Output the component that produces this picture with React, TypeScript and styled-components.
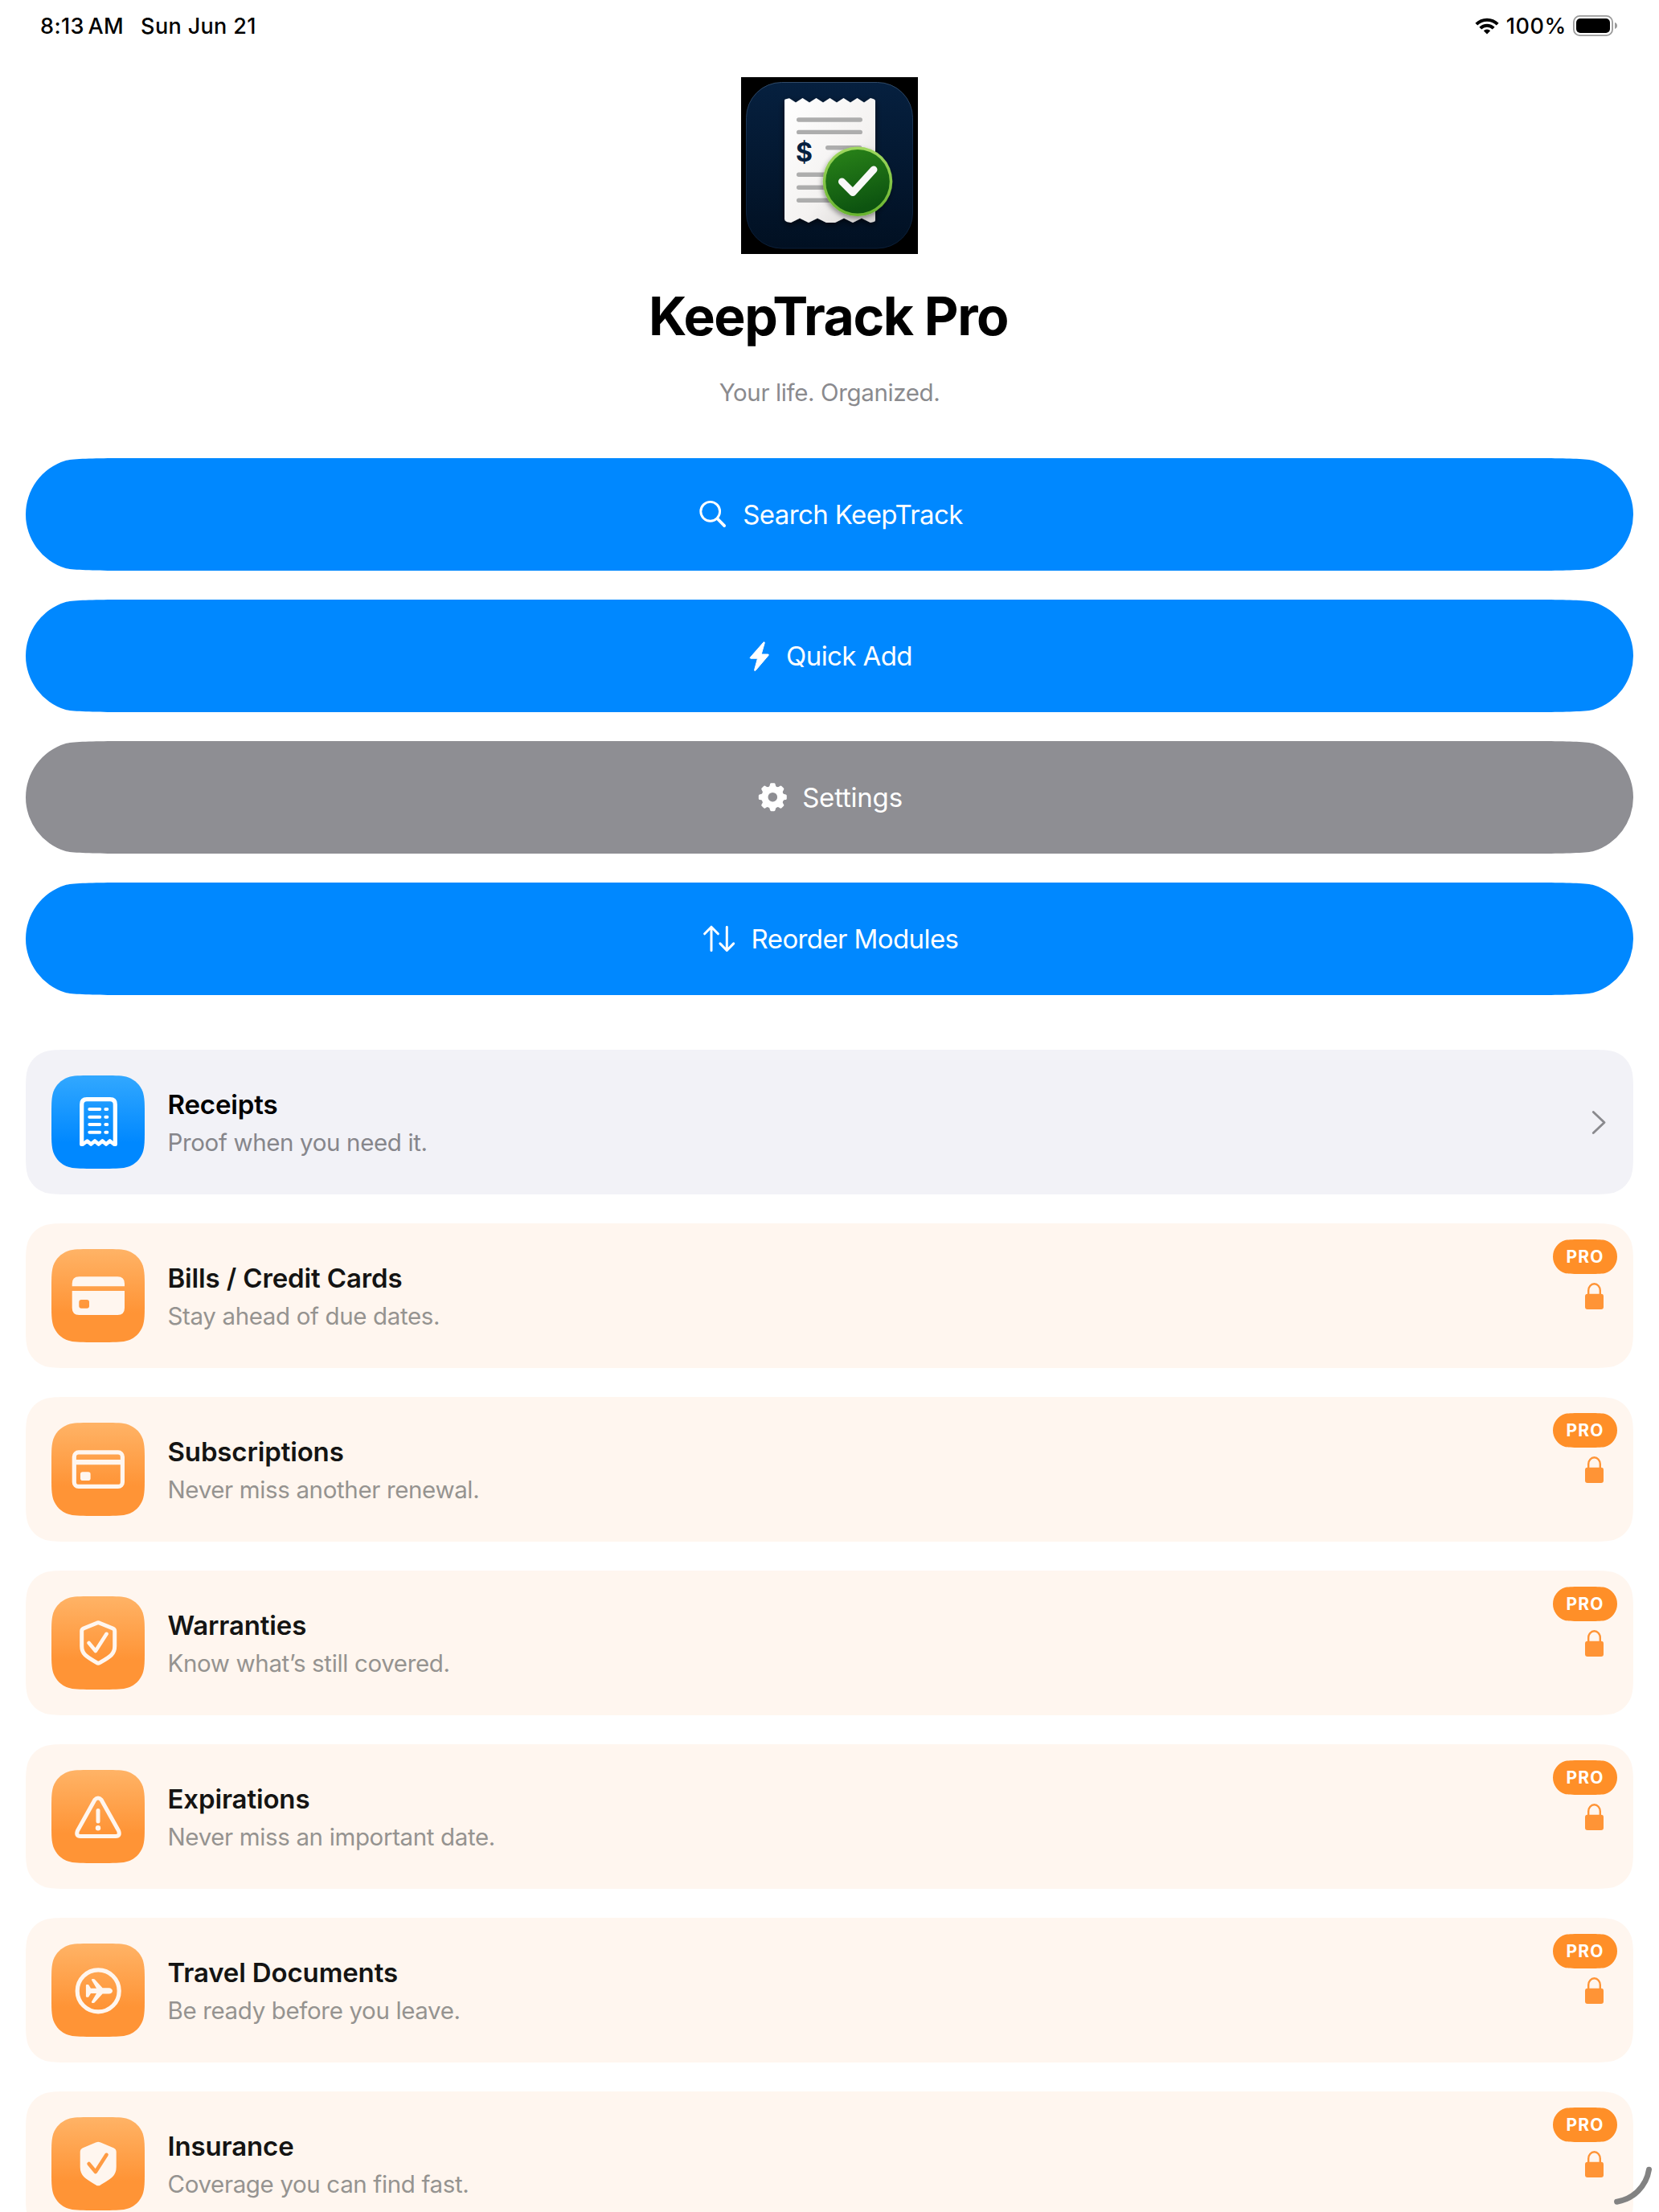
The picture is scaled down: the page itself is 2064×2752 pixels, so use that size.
import type { ReactNode } from 'react';
import styled, { createGlobalStyle } from 'styled-components';

// Capsule: circular end caps that ease slowly into the straight edges
const capsule = (w: number, h: number) => {
  const r = h / 2;
  const a = 1.53 * r;
  const b = 0.7 * r;
  const c = 0.04586 * r;
  const f = 1.143 * r;
  const p = 0.807 * r;
  const s = 0.0125 * r;
  const t = 0.005 * r;

  return [
    `M${a} 0H${w - a}`,
    `C${w - f} ${t} ${w - p} ${s} ${w - b} ${c}`,
    `A${r} ${r} 0 0 1 ${w} ${r}`,
    `A${r} ${r} 0 0 1 ${w - b} ${h - c}`,
    `C${w - p} ${h - s} ${w - f} ${h - t} ${w - a} ${h}`,
    `H${a}`,
    `C${f} ${h - t} ${p} ${h - s} ${b} ${h - c}`,
    `A${r} ${r} 0 0 1 0 ${r}`,
    `A${r} ${r} 0 0 1 ${b} ${c}`,
    `C${p} ${s} ${f} ${t} ${a} 0Z`,
  ].join('');
};

// Rounded rectangle with continuous (smoothed) corners
const smoothRect = (w: number, h: number, r: number) => {
  const a = 1.528665 * r;
  const b = 0.631494 * r;
  const c = 0.074911 * r;
  const d = 0.372824 * r;
  const e = 0.169059 * r;
  const f = 1.088493 * r;
  const g = 0.868407 * r;

  return [
    `M${a} 0H${w - a}`,
    `C${w - f} 0 ${w - g} 0 ${w - b} ${c}`,
    `C${w - d} ${e} ${w - e} ${d} ${w - c} ${b}`,
    `C${w} ${g} ${w} ${f} ${w} ${a}`,
    `V${h - a}`,
    `C${w} ${h - f} ${w} ${h - g} ${w - c} ${h - b}`,
    `C${w - e} ${h - d} ${w - d} ${h - e} ${w - b} ${h - c}`,
    `C${w - g} ${h} ${w - f} ${h} ${w - a} ${h}`,
    `H${a}`,
    `C${f} ${h} ${g} ${h} ${b} ${h - c}`,
    `C${d} ${h - e} ${e} ${h - d} ${c} ${h - b}`,
    `C0 ${h - g} 0 ${h - f} 0 ${h - a}`,
    `V${a}`,
    `C0 ${f} 0 ${g} ${c} ${b}`,
    `C${e} ${d} ${d} ${e} ${b} ${c}`,
    `C${g} 0 ${f} 0 ${a} 0Z`,
  ].join('');
};

const GlobalStyle = createGlobalStyle`
  * {
    box-sizing: border-box;
  }

  body {
    margin: 0;
    background: #fff;
    color: #000;
    font-family: Inter, "Liberation Sans", sans-serif;
  }
`;

const Screen = styled.div`
  position: relative;
  width: 2064px;
  height: 2752px;
  overflow: hidden;
  background: #fff;
`;

const StatusBar = styled.header`
  display: flex;
  align-items: center;
  height: 64px;
  padding: 0 52px 0 50px;
  font-size: 27px;
  font-weight: 450;
  line-height: 36px;

  span {
    padding-top: 1px;
  }
`;

const Time = styled.span`
  letter-spacing: 0.4px;
  word-spacing: -3px;
`;

const DateText = styled.span`
  margin-left: 21px;
  letter-spacing: 0.35px;
`;

const StatusRight = styled.div`
  display: flex;
  align-items: center;
  margin-left: auto;
`;

const Percent = styled.span`
  margin: 0 8px 0 9px;
  letter-spacing: 0.6px;
`;

const Content = styled.main`
  display: flex;
  flex-direction: column;
  align-items: center;
  padding: 32px 32px 0;
`;

const Title = styled.h1`
  margin: 37px 0 0;
  padding-right: 3px;
  font-size: 66px;
  font-weight: 700;
  line-height: 80px;
  letter-spacing: -1.45px;
`;

const Tagline = styled.p`
  margin: 37px 0 0;
  color: #8a8a8e;
  font-size: 29.5px;
  line-height: 36px;
  letter-spacing: -0.38px;
`;

const Actions = styled.div`
  display: flex;
  flex-direction: column;
  gap: 36px;
  margin-top: 64px;
`;

const ActionButton = styled.button<{ $muted?: boolean }>`
  display: flex;
  align-items: center;
  justify-content: center;
  gap: 16px;
  width: 2000px;
  height: 140px;
  padding: 0 1px 0 0;
  border: 0;
  background: ${({ $muted }) => ($muted ? '#8e8e93' : '#0088ff')};
  clip-path: path('${capsule(2000, 140)}');
  color: #fff;
  font: inherit;
  font-size: 33px;
  letter-spacing: ${({ $muted }) => ($muted ? '-0.2px' : '-0.6px')};
`;

const Modules = styled.div`
  display: flex;
  flex-direction: column;
  gap: 36px;
  margin-top: 68px;
`;

const ModuleCard = styled.article<{ $locked?: boolean }>`
  display: flex;
  align-items: center;
  width: 2000px;
  height: 180px;
  padding: 0 32px;
  background: ${({ $locked }) => ($locked ? '#fff6ef' : '#f2f2f7')};
  clip-path: path('${smoothRect(2000, 180, 36)}');
  color: ${({ $locked }) => ($locked ? '#141413' : '#000')};
`;

const Tile = styled.div<{ $locked?: boolean }>`
  width: 116px;
  height: 116px;
  background: ${({ $locked }) =>
    $locked
      ? 'linear-gradient(#ffb366, #ff9436 68%, #ff9436)'
      : 'linear-gradient(#32a8ff, #0088ff 72%, #0088ff)'};
  clip-path: path('${smoothRect(116, 116, 32)}');
  color: ${({ $locked }) => ($locked ? '#fff6ef' : '#fff')};

  > svg {
    display: block;
  }
`;

const CardText = styled.div`
  display: flex;
  flex-direction: column;
  gap: 8px;
  margin-left: 28.5px;
`;

const CardTitle = styled.h2`
  margin: 0;
  font-size: 33px;
  font-weight: 600;
  line-height: 42px;
  letter-spacing: -0.14px;
`;

const CardSubtitle = styled.p<{ $locked?: boolean }>`
  margin: 0;
  color: ${({ $locked }) => ($locked ? '#959390' : '#86868b')};
  font-size: 29.5px;
  line-height: 36px;
  letter-spacing: -0.36px;
`;

const Chevron = styled.svg`
  margin-left: auto;
`;

const LockInfo = styled.div`
  display: flex;
  flex-direction: column;
  align-items: flex-end;
  align-self: flex-start;
  gap: 11px;
  margin: 20px -12px 0 auto;
`;

const ProBadge = styled.span`
  display: flex;
  align-items: center;
  justify-content: center;
  width: 80px;
  height: 43px;
  background: #ff8f28;
  clip-path: path('${capsule(80, 43)}');
  color: #fff;
  font-size: 21px;
  font-weight: 700;
  letter-spacing: 1.1px;
`;

const Lock = styled.svg`
  margin-right: 17px;
`;

// Window resize handle, floats over the corner of the screen
const ResizeHandle = styled.svg`
  position: absolute;
  right: 0;
  bottom: 0;
`;

function WifiIcon() {
  return (
    <svg width="30" height="21" viewBox="0 0 30 21" fill="none" stroke="#000" strokeWidth="4">
      <path d="M1.8 8.2a18.6 18.6 0 0 1 26.4 0" />
      <path d="M6.8 13.2a11.5 11.5 0 0 1 16.4 0" />
      <path d="M15 20.6l-4.2-4.3a6 6 0 0 1 8.4 0z" fill="#000" stroke="none" />
    </svg>
  );
}

function BatteryIcon() {
  return (
    <svg width="55" height="26" viewBox="0 0 55 26">
      <rect x="0.9" y="0.9" width="48.2" height="24.2" rx="7.6" fill="none" stroke="#9b9b9b" strokeWidth="1.8" />
      <rect x="4" y="4" width="42" height="18" rx="5" fill="#000" />
      <path d="M52 9c2 .6 3 2.2 3 4s-1 3.4-3 4z" fill="#9b9b9b" />
    </svg>
  );
}

function AppLogo() {
  return (
    <svg width="220" height="220" viewBox="0 0 220 220">
      <defs>
        <linearGradient id="navy" x1="0" y1="0" x2="0" y2="1">
          <stop offset="0" stopColor="#06203f" />
          <stop offset="1" stopColor="#011022" />
        </linearGradient>
        <linearGradient id="rim" x1="0" y1="0" x2="0" y2="1">
          <stop offset="0" stopColor="#304a68" />
          <stop offset="0.4" stopColor="#0d2848" />
          <stop offset="1" stopColor="#0a1e38" />
        </linearGradient>
        <linearGradient id="paper" x1="0" y1="0" x2="1" y2="1">
          <stop offset="0" stopColor="#ffffff" />
          <stop offset="0.6" stopColor="#f4f2f1" />
          <stop offset="1" stopColor="#d5d2d0" />
        </linearGradient>
        <linearGradient id="green" x1="0" y1="0" x2="0.3" y2="1">
          <stop offset="0" stopColor="#2a8519" />
          <stop offset="1" stopColor="#0d5410" />
        </linearGradient>
        <linearGradient id="ring" x1="0" y1="0" x2="0" y2="1">
          <stop offset="0" stopColor="#a0d860" />
          <stop offset="1" stopColor="#68b42e" />
        </linearGradient>
        <filter id="shadow" x="-20%" y="-20%" width="140%" height="140%">
          <feDropShadow dx="0" dy="3" stdDeviation="4" floodColor="#000" floodOpacity="0.6" />
        </filter>
        <filter id="badgeShadow" x="-20%" y="-20%" width="140%" height="140%">
          <feDropShadow dx="-1" dy="3" stdDeviation="3" floodColor="#000" floodOpacity="0.4" />
        </filter>
      </defs>
      <rect width="220" height="220" fill="#000" />
      <rect x="6.5" y="6.5" width="207" height="206.5" rx="44" fill="url(#navy)" stroke="url(#rim)" />
      <path
        filter="url(#shadow)"
        fill="url(#paper)"
        d="M54 29Q54 27.500 56 27.200L60 26.300 68 31.500 76.500 26 85 31.500 93.500 26 102 31.500 110.500 26 119 31.500 127.500 26 136 31.500 144.500 26 153 31.500 161 26 165 27.200Q167 28 167 29.500V178Q167 179.500 165 180L161 181 150 175.500 139 181 128 175.500 117 181 106 181 95 175.500 84 181 73 175.500 62 181 57 180Q54 178.500 54 176.500Z"
      />
      <g stroke="#adadad" strokeWidth="5.4" strokeLinecap="round">
        <path d="M71.700 53h76.600M71.700 68.400h76.600M107.700 87.700h40M71.700 121.300h42M71.700 137.300h42M71.700 153.300h46" />
      </g>
      <text x="78.5" y="104.5" textAnchor="middle" fontFamily="Inter, sans-serif" fontSize="32" fontWeight="650" fill="#06203f">
        $
      </text>
      <g filter="url(#badgeShadow)">
        <circle cx="145" cy="129.7" r="43.3" fill="url(#ring)" />
      </g>
      <circle cx="145" cy="129.7" r="39.8" fill="url(#green)" />
      <path d="M125.500 130l13.500 13.500 26-28.500" fill="none" stroke="#f8f8f8" strokeWidth="9" strokeLinecap="round" strokeLinejoin="round" />
    </svg>
  );
}

function SearchIcon() {
  return (
    <svg width="43" height="48" viewBox="0 0 43 48" fill="none" stroke="#fff" strokeLinecap="round">
      <circle cx="18.7" cy="20.3" r="11.9" strokeWidth="2.9" />
      <path d="M27.500 29.200l8.700 8.900" strokeWidth="3.7" />
    </svg>
  );
}

function BoltIcon() {
  return (
    <svg width="34" height="48" viewBox="0 0 34 48" fill="#fff" stroke="#fff" strokeLinejoin="round">
      <path d="M21.800 7.200L5.500 25.800c-.5.800-.2 1.400.6 1.400h8.400L10.600 41.400c-.3 1.200.8 1.600 1.500.7L28 23.400c.5-.8.200-1.400-.6-1.400H19.200l4-14c.3-1.200-.7-1.600-1.400-.8z" />
    </svg>
  );
}

function GearIcon() {
  const teeth = [0, 45, 90, 135, 180, 225, 270, 315];
  return (
    <svg width="42" height="48" viewBox="0 0 42 48">
      <g transform="translate(21.3 23.7)">
        <circle r="9.8" fill="none" stroke="#fff" strokeWidth="8" />
        {teeth.map((angle) => (
          <path
            key={angle}
            transform={`rotate(${angle})`}
            fill="#fff"
            d="M-5.200-12.500Q-3.700-13.200-3.400-15.500L-3.200-16.400Q-2.900-17.500-1.800-17.500H1.800Q2.900-17.500 3.200-16.400L3.400-15.500Q3.700-13.200 5.200-12.500Z"
          />
        ))}
      </g>
    </svg>
  );
}

function ReorderIcon() {
  return (
    <svg width="48" height="48" viewBox="0 0 48 48" fill="none" stroke="#fff" strokeWidth="3" strokeLinecap="round" strokeLinejoin="round">
      <path d="M14 38.500V9.200M5.600 17.800L14 9.200l8.400 8.600" />
      <path d="M33.300 9.200v29.300M24.900 29.900l8.400 8.600 8.400-8.600" />
    </svg>
  );
}

function ChevronIcon() {
  return (
    <Chevron width="24" height="36" viewBox="0 0 24 36" fill="none" stroke="#8a8a8e" strokeWidth="2.9" strokeLinecap="round" strokeLinejoin="round">
      <path d="M6.300 5.500L20 18.500 6.300 31.500" />
    </Chevron>
  );
}

function LockIcon() {
  return (
    <Lock width="23" height="33" viewBox="0 0 23 33">
      <path d="M4.200 16V9.500a7.300 8.200 0 0 1 14.600 0V16" fill="none" stroke="#ff9436" strokeWidth="2.4" />
      <rect y="13.8" width="23" height="19.2" rx="3" fill="#ff9436" />
    </Lock>
  );
}

function TileIcon({ children }: { children: ReactNode }) {
  return (
    <svg width="116" height="116" viewBox="0 0 116 116" fill="none" stroke="currentColor" strokeWidth="5.2" strokeLinecap="round" strokeLinejoin="round">
      {children}
    </svg>
  );
}

const shield =
  'M56.500 33.200Q58.200 32.300 59.900 33.200L76.500 40Q78.700 41 78.700 43.200V62C78.700 72 73 75 60 82.700Q58.200 83.800 56.400 82.700C43.500 75 37.700 72 37.700 62V43.200Q37.700 41 39.900 40Z';
const shieldCheck = 'M46.600 58L54.900 68 68.500 46.800';

const receiptIcon = (
  <TileIcon>
    <path d="M37.700 85.500V36Q37.700 29.700 44 29.700H73Q79.300 29.700 79.300 36V85.500" />
    <path d="M37.700 84.500L39.200 85.500 44.500 81.500 49.200 85.500 54 81.500 58.700 85.500 63.400 81.500 68 85.500 72.700 81.500 77.800 85.500 79.300 84.500" strokeWidth="4.6" />
    <path d="M47.300 42.100H60.200M47.300 51.700H60.200M47.300 61.100H60.200M47.300 70.700H60.200" strokeWidth="4" />
    <path d="M67.300 42.100H69.300M67.300 51.700H69.300M67.300 61.100H69.300M67.300 70.700H69.300" strokeWidth="4" />
  </TileIcon>
);

const cardFilledIcon = (
  <TileIcon>
    <path
      fill="currentColor"
      stroke="none"
      fillRule="evenodd"
      d="M25.700 46.300V43Q25.700 34.300 34.400 34.300H82.300Q91 34.300 91 43V46.300ZM25.700 52H91V73.300Q91 82 82.300 82H34.400Q25.700 82 25.700 73.300ZM37.300 63Q34.300 63 34.300 66V70.700Q34.300 73.700 37.300 73.700H44Q47 73.700 47 70.700V66Q47 63 44 63Z"
    />
  </TileIcon>
);

const cardOutlineIcon = (
  <TileIcon>
    <rect x="28.3" y="36.9" width="60.1" height="42.5" rx="5.5" />
    <path d="M28.300 49.200H88.400" strokeWidth="6.2" strokeLinecap="butt" />
    <rect x="36" y="61.3" width="12.6" height="10.7" rx="2.8" fill="currentColor" stroke="none" />
  </TileIcon>
);

const shieldIcon = (
  <TileIcon>
    <path d={shield} strokeWidth="5" />
    <path d={shieldCheck} strokeWidth="4.6" />
  </TileIcon>
);

const warningIcon = (
  <TileIcon>
    <path d="M53.900 37.200Q58 32.800 62.100 37.200L83.600 75.800Q86 82.300 80 82.400H36Q30 82.300 32.400 75.800Z" strokeWidth="5" />
    <path d="M58 50.500V64" strokeWidth="5" />
    <circle cx="58" cy="72.2" r="3.2" fill="currentColor" stroke="none" />
  </TileIcon>
);

const airplaneIcon = (
  <TileIcon>
    <circle cx="58.2" cy="58.9" r="26" />
    <path
      fill="currentColor"
      stroke="none"
      d="M42.900 52Q43 51 44 51H45.400Q46 51 46.400 51.600L49 55.800H56L50 45.500Q49.600 44 50.900 43.900H52.200Q53.200 43.900 53.800 44.600L63.600 55.200H71.500C74 55.300 76 57 76 58.900S74 62.500 71.500 62.600H63.600L53.800 73.200Q53.200 73.900 52.200 73.900H50.900Q49.600 73.800 50 72.300L56 62H49L46.400 66.200Q46 66.800 45.400 66.800H44Q43 66.800 42.900 65.800Z"
    />
  </TileIcon>
);

const shieldFilledIcon = (
  <TileIcon>
    <path d={shield} fill="currentColor" strokeWidth="4" />
    <path d={shieldCheck} stroke="#ff9b43" strokeWidth="4.6" />
  </TileIcon>
);

const modules = [
  { title: 'Receipts', subtitle: 'Proof when you need it.', icon: receiptIcon, locked: false },
  { title: 'Bills / Credit Cards', subtitle: 'Stay ahead of due dates.', icon: cardFilledIcon, locked: true },
  { title: 'Subscriptions', subtitle: 'Never miss another renewal.', icon: cardOutlineIcon, locked: true },
  { title: 'Warranties', subtitle: 'Know what’s still covered.', icon: shieldIcon, locked: true },
  { title: 'Expirations', subtitle: 'Never miss an important date.', icon: warningIcon, locked: true },
  { title: 'Travel Documents', subtitle: 'Be ready before you leave.', icon: airplaneIcon, locked: true },
  { title: 'Insurance', subtitle: 'Coverage you can find fast.', icon: shieldFilledIcon, locked: true },
];

function App() {
  return (
    <Screen>
      <GlobalStyle />
      <StatusBar>
        <Time>8:13 AM</Time>
        <DateText>Sun Jun 21</DateText>
        <StatusRight>
          <WifiIcon />
          <Percent>100%</Percent>
          <BatteryIcon />
        </StatusRight>
      </StatusBar>

      <Content>
        <AppLogo />
        <Title>KeepTrack Pro</Title>
        <Tagline>Your life. Organized.</Tagline>

        <Actions>
          <ActionButton>
            <SearchIcon />
            Search KeepTrack
          </ActionButton>
          <ActionButton>
            <BoltIcon />
            Quick Add
          </ActionButton>
          <ActionButton $muted>
            <GearIcon />
            Settings
          </ActionButton>
          <ActionButton>
            <ReorderIcon />
            Reorder Modules
          </ActionButton>
        </Actions>

        <Modules>
          {modules.map(({ title, subtitle, icon, locked }) => (
            <ModuleCard key={title} $locked={locked}>
              <Tile $locked={locked}>{icon}</Tile>
              <CardText>
                <CardTitle>{title}</CardTitle>
                <CardSubtitle $locked={locked}>{subtitle}</CardSubtitle>
              </CardText>
              {locked ? (
                <LockInfo>
                  <ProBadge>PRO</ProBadge>
                  <LockIcon />
                </LockInfo>
              ) : (
                <ChevronIcon />
              )}
            </ModuleCard>
          ))}
        </Modules>
      </Content>

      <ResizeHandle width="70" height="70" viewBox="0 0 70 70" fill="none" stroke="#828282" strokeWidth="7" strokeLinecap="round">
        <path d="M57.500 17.300A48 48 0 0 1 17.600 57.200" />
      </ResizeHandle>
    </Screen>
  );
}

export default App;
